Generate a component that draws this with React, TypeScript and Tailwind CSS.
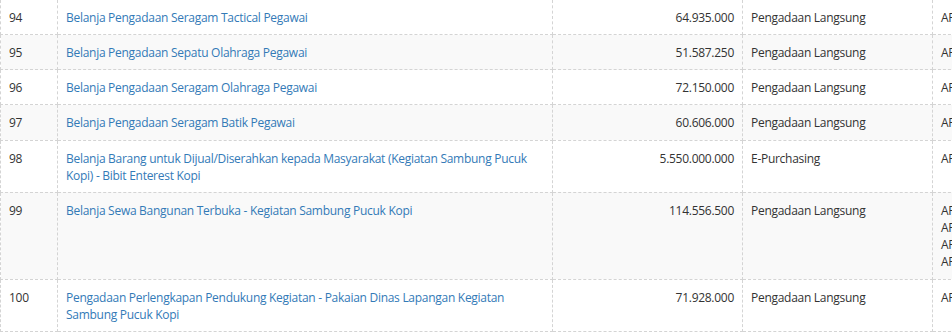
const rows = [
  { no: 94, name: 'Belanja Pengadaan Seragam Tactical Pegawai', pagu: '64.935.000', metode: 'Pengadaan Langsung', sumber: ['APBD'] },
  { no: 95, name: 'Belanja Pengadaan Sepatu Olahraga Pegawai', pagu: '51.587.250', metode: 'Pengadaan Langsung', sumber: ['APBD'] },
  { no: 96, name: 'Belanja Pengadaan Seragam Olahraga Pegawai', pagu: '72.150.000', metode: 'Pengadaan Langsung', sumber: ['APBD'] },
  { no: 97, name: 'Belanja Pengadaan Seragam Batik Pegawai', pagu: '60.606.000', metode: 'Pengadaan Langsung', sumber: ['APBD'] },
  {
    no: 98,
    name: 'Belanja Barang untuk Dijual/Diserahkan kepada Masyarakat (Kegiatan Sambung Pucuk Kopi) - Bibit Enterest Kopi',
    pagu: '5.550.000.000',
    metode: 'E-Purchasing',
    sumber: ['APBD'],
  },
  {
    no: 99,
    name: 'Belanja Sewa Bangunan Terbuka - Kegiatan Sambung Pucuk Kopi',
    pagu: '114.556.500',
    metode: 'Pengadaan Langsung',
    sumber: ['APBD', 'APBD', 'APBD', 'APBD'],
  },
  {
    no: 100,
    name: 'Pengadaan Perlengkapan Pendukung Kegiatan - Pakaian Dinas Lapangan Kegiatan Sambung Pucuk Kopi',
    pagu: '71.928.000',
    metode: 'Pengadaan Langsung',
    sumber: ['APBD'],
  },
];

export default function App() {
  return (
    <div className="w-[952px] h-[333px] overflow-hidden bg-white">
      <table
        className="table-fixed border-collapse w-[1100px] text-[12px] leading-[17.15px] tracking-[-0.28px] text-[#333]"
        style={{ fontFamily: '"Open Sans", "Liberation Sans", sans-serif' }}
      >
        <colgroup>
          <col className="w-[57px]" />
          <col className="w-[495px]" />
          <col className="w-[190px]" />
          <col className="w-[190px]" />
          <col />
        </colgroup>
        <tbody>
          {rows.map((r, i) => {
            const cell =
              'border border-dashed border-[#d4d4d4] pl-2 pr-2 pt-[9px] pb-2 align-top' +
              (i === 0 ? ' border-t-0' : '');
            return (
              <tr key={r.no} className={i % 2 === 1 ? 'bg-[#f9f9f9]' : 'bg-white'}>
                <td className={cell}>{r.no}</td>
                <td className={cell}>
                  <a href="#" className="text-[#337ab7] no-underline">
                    {r.name}
                  </a>
                </td>
                <td className={cell + ' text-right'}>{r.pagu}</td>
                <td className={cell}>{r.metode}</td>
                <td className={cell}>
                  {r.sumber.map((s, j) => (
                    <div key={j}>{s}</div>
                  ))}
                </td>
              </tr>
            );
          })}
        </tbody>
      </table>
    </div>
  );
}
